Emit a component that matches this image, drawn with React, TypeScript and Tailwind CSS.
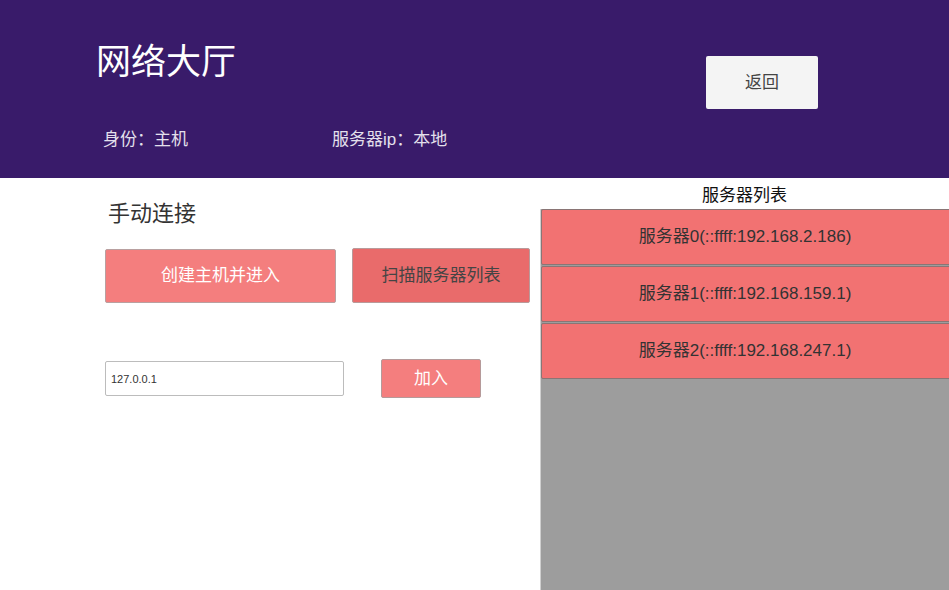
const servers = [
  '服务器0(::ffff:192.168.2.186)',
  '服务器1(::ffff:192.168.159.1)',
  '服务器2(::ffff:192.168.247.1)',
]

function App() {
  return (
    <div className="w-[949px] h-[590px] overflow-hidden flex flex-col bg-white font-['Liberation_Sans','Noto_Sans_CJK_SC',sans-serif]">
      {/* header */}
      <div className="h-[178px] shrink-0 bg-[#391b6a] flex flex-row">
        <div className="w-[610px] pl-[96px] pt-[41px] flex flex-col">
          <div className="text-[35px] leading-[42px] text-white">网络大厅</div>
          <div className="flex flex-row mt-[46px] pl-[7px] text-[17px] leading-[22px] text-[#e4e0ec]">
            <div className="w-[229px]">身份：主机</div>
            <div>服务器ip：本地</div>
          </div>
        </div>
        <div className="pl-[96px] pt-[56px]">
          <button className="w-[112px] h-[53px] bg-[#f4f4f4] rounded-[2px] text-[17px] text-[#444]">返回</button>
        </div>
      </div>

      <div className="flex flex-row flex-1">
        {/* left */}
        <div className="w-[540px] shrink-0 flex flex-col pl-[105px]">
          <div className="pl-[3px] mt-[22px] text-[22px] leading-[28px] text-[#333]">手动连接</div>
          <div className="flex flex-row items-start gap-[16px] mt-[20px]">
            <button className="mt-[1px] w-[231px] h-[54px] bg-[#f47e7e] border border-[#b9a0a0] rounded-[2px] text-[17px] text-white">创建主机并进入</button>
            <button className="w-[178px] h-[55px] bg-[#e96b6b] border border-[#b99a9a] rounded-[2px] text-[17px] text-[#444]">扫描服务器列表</button>
          </div>
          <div className="flex flex-row items-center mt-[56px] gap-[37px]">
            <input
              defaultValue="127.0.0.1"
              className="w-[239px] h-[35px] border border-[#bcbcbc] rounded-[2px] px-[5px] text-[11px] text-[#333] outline-none"
            />
            <button className="w-[100px] h-[39px] bg-[#f47e7e] border border-[#b59a9a] rounded-[2px] text-[17px] text-white">加入</button>
          </div>
        </div>

        {/* right */}
        <div className="flex-1 flex flex-col">
          <div className="h-[31px] shrink-0 flex items-center justify-center text-[17px] text-[#111] pt-[4px]">服务器列表</div>
          <div className="flex-1 bg-[#9d9d9d] border-l border-[#d0d0d0] flex flex-col gap-[1px]">
            {servers.map((s) => (
              <div
                key={s}
                className="h-[56px] bg-[#f27272] border border-[#8a7575] rounded-[2px] flex items-center justify-center text-[17px] text-[#333] -mr-[4px] pr-[4px]"
              >
                {s}
              </div>
            ))}
          </div>
        </div>
      </div>
    </div>
  )
}

export default App
